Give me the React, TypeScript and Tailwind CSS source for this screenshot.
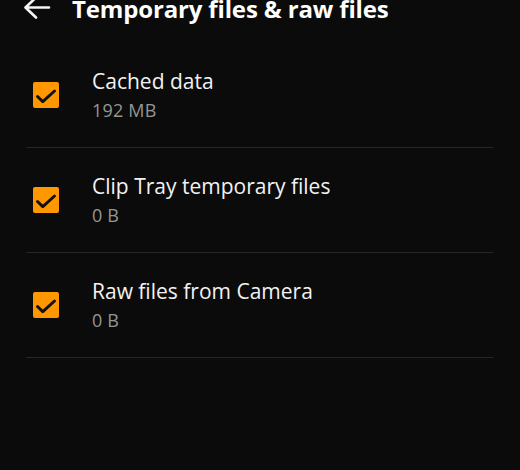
import React from "react";

type Item = { title: string; size: string };

const items: Item[] = [
  { title: "Cached data", size: "192 MB" },
  { title: "Clip Tray temporary files", size: "0 B" },
  { title: "Raw files from Camera", size: "0 B" },
];

function CheckBox() {
  return (
    <div className="flex h-[26px] w-[26px] shrink-0 items-center justify-center rounded-[2px] bg-[#ff9800]">
      <svg width="26" height="26" viewBox="0 0 26 26" fill="none">
        <path d="M4.5 14.5 L9.8 19.6 L21.5 9" stroke="#111" strokeWidth="3" strokeLinecap="round" strokeLinejoin="round" />
      </svg>
    </div>
  );
}

function Row({ item }: { item: Item }) {
  return (
    <div className="flex h-[105px] items-center border-b border-[#262626] pl-[7px]">
      <CheckBox />
      <div className="ml-[33px] mb-[1px] flex flex-col">
        <div className="text-[21px] leading-[28px] text-[#f2f2f2]">{item.title}</div>
        <div className="mt-[3px] text-[18px] leading-[24px] tracking-[0.2px] text-[#959595]">{item.size}</div>
      </div>
    </div>
  );
}

export default function App() {
  return (
    <div
      className="h-[470px] w-[520px] overflow-hidden bg-[#0b0b0b]"
      style={{ fontFamily: "'Open Sans', Roboto, sans-serif" }}
    >
      <div className="mt-[-7px] flex h-[50px] items-start">
        <svg className="ml-[23px] mt-[1px]" width="28" height="28" viewBox="0 0 28 28" fill="none">
          <path d="M26 13.5 H3 M13 3.5 L2.5 13.5 L13 23.5" stroke="#f5f5f5" strokeWidth="2.6" strokeLinecap="round" strokeLinejoin="round" />
        </svg>
        <h1 className="ml-[21px] text-[24px] font-bold leading-[32px] tracking-[-0.15px] text-white">
          Temporary files &amp; raw files
        </h1>
      </div>
      <div className="ml-[26px] mr-[27px]">
        {items.map((it) => (
          <Row key={it.title} item={it} />
        ))}
      </div>
    </div>
  );
}
